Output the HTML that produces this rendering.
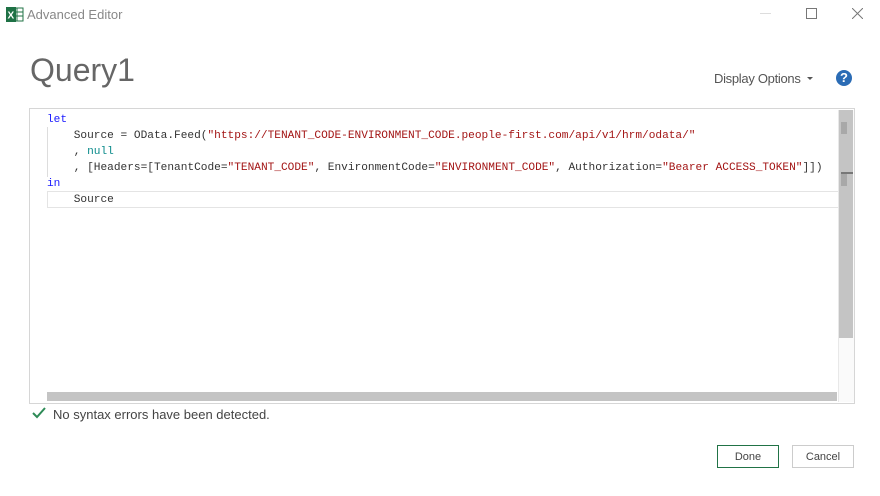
<!DOCTYPE html>
<html><head><style>
body{margin:0;width:880px;height:496px;background:#fff;position:relative;font-family:"Liberation Sans",sans-serif;overflow:hidden}
.abs{position:absolute}
.code{font-family:"Liberation Mono",monospace;font-size:11.15px;white-space:pre;color:#333;line-height:16px}
.k{color:#1a1aff}.s{color:#a31515}.n{color:#098a8a}
</style></head><body>
<svg class="abs" style="left:6px;top:7px" width="18" height="15" viewBox="0 0 18 15">
<rect x="6" y="1" width="11" height="13" fill="#fff" stroke="#217346"/>
<line x1="11" y1="1" x2="11" y2="14" stroke="#217346"/><line x1="6" y1="5" x2="17" y2="5" stroke="#217346"/><line x1="6" y1="9" x2="17" y2="9" stroke="#217346"/>
<rect x="0" y="0" width="10" height="15" fill="#1e7145"/>
<text x="1.5" y="11.5" font-family="Liberation Sans" font-size="10" font-weight="bold" fill="#fff">X</text>
</svg>
<div class="abs" style="left:27px;top:7px;font-size:13px;color:#888">Advanced Editor</div>
<div class="abs" style="left:760px;top:13px;width:11px;height:1px;background:#ddd"></div>
<div class="abs" style="left:806px;top:8px;width:9px;height:9px;border:1px solid #777"></div>
<svg class="abs" style="left:852px;top:8px" width="11" height="11"><path d="M0 0L11 11M11 0L0 11" stroke="#777" stroke-width="1"/></svg>
<div class="abs" style="left:30px;top:52px;font-size:32px;color:#666;font-weight:300">Query1</div>
<div class="abs" style="left:714px;top:71px;font-size:13px;color:#555;letter-spacing:-0.3px">Display Options</div>
<div class="abs" style="left:807px;top:77px;width:0;height:0;border-left:3px solid transparent;border-right:3px solid transparent;border-top:3px solid #555"></div>
<div class="abs" style="left:836px;top:70px;width:16px;height:16px;border-radius:50%;background:#2b6cb5;color:#fff;font-size:13px;font-weight:bold;text-align:center;line-height:16px">?</div>
<div class="abs" style="left:29px;top:108px;width:824px;height:294px;border:1px solid #d6d6d6;background:#fff"></div>
<div class="abs" style="left:47px;top:191px;width:791px;height:15px;border-top:1px solid #e4e4e4;border-bottom:1px solid #e4e4e4;border-left:1px solid #e4e4e4"></div>
<div class="abs" style="left:47px;top:127px;width:1px;height:50px;background:#ddd"></div>
<div class="abs code" style="left:47px;top:112px"><span class="k">let</span>
    Source = OData.Feed(<span class="s">"https://TENANT_CODE-ENVIRONMENT_CODE.people-first.com/api/v1/hrm/odata/"</span>
    , <span class="n">null</span>
    , [Headers=[TenantCode=<span class="s">"TENANT_CODE"</span>, EnvironmentCode=<span class="s">"ENVIRONMENT_CODE"</span>, Authorization=<span class="s">"Bearer ACCESS_TOKEN"</span>]])
<span class="k">in</span>
    Source</div>
<div class="abs" style="left:838px;top:110px;width:15px;height:292px;background:#fafafa;border-left:1px solid #e8e8e8"></div>
<div class="abs" style="left:839px;top:110px;width:14px;height:228px;background:#c4c4c4"></div>
<div class="abs" style="left:841px;top:122px;width:6px;height:12px;background:#a8a8a8"></div>
<div class="abs" style="left:841px;top:174px;width:6px;height:12px;background:#a8a8a8"></div>
<div class="abs" style="left:841px;top:172px;width:12px;height:2px;background:#777"></div>
<div class="abs" style="left:47px;top:392px;width:790px;height:9px;background:#c4c4c4"></div>
<svg class="abs" style="left:32px;top:407px" width="14" height="12"><path d="M1 6L5 10L13 1" stroke="#2e8b57" stroke-width="2" fill="none"/></svg>
<div class="abs" style="left:53px;top:407px;font-size:13px;color:#444">No syntax errors have been detected.</div>
<div class="abs" style="left:717px;top:445px;width:60px;height:21px;border:1px solid #217346;background:#fff;font-size:11px;color:#444;text-align:center;line-height:22px">Done</div>
<div class="abs" style="left:792px;top:445px;width:60px;height:21px;border:1px solid #ccc;background:#fff;font-size:11px;color:#444;text-align:center;line-height:22px">Cancel</div>
</body></html>
